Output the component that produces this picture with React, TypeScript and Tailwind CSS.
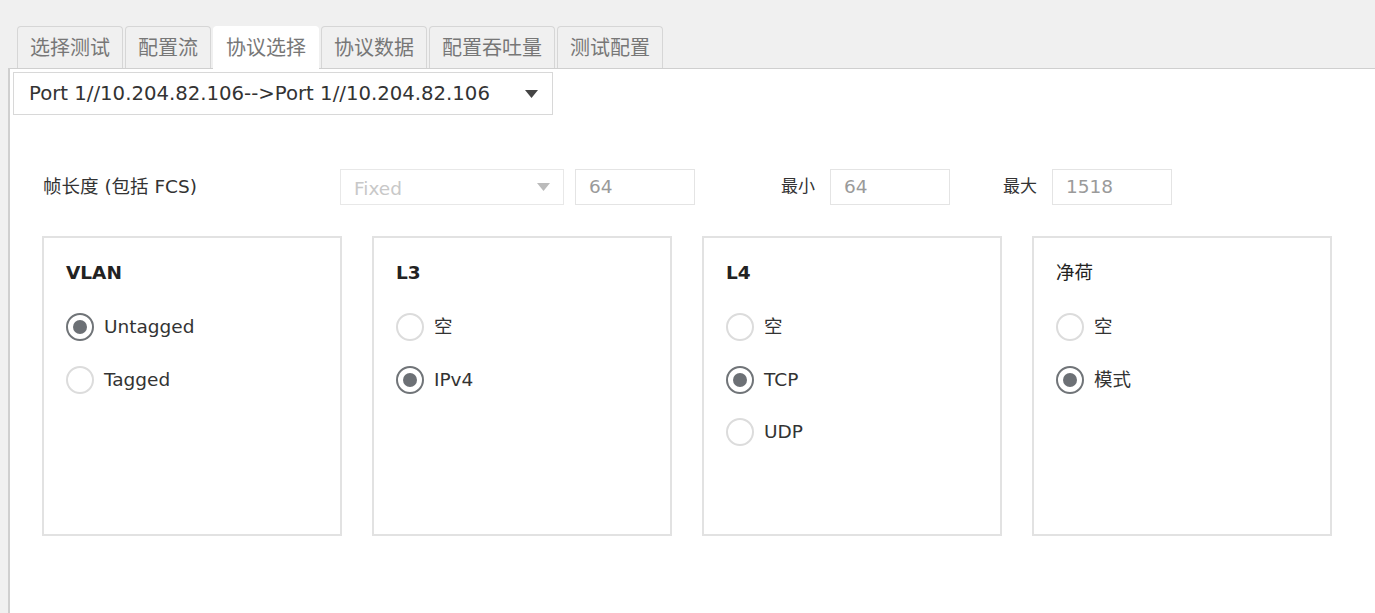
import React from "react";

const font = { fontFamily: '"DejaVu Sans", "Noto Sans CJK SC", sans-serif' };

const tabs = ["选择测试", "配置流", "协议选择", "协议数据", "配置吞吐量", "测试配置"];

function Radio({ label, checked }: { label: string; checked?: boolean }) {
  return (
    <div className="flex items-center h-[52.5px]">
      <div
        className={
          "w-[28px] h-[28px] rounded-full border-2 flex items-center justify-center bg-white shrink-0 " +
          (checked ? "border-[#707478]" : "border-[#dcdcdc]")
        }
      >
        {checked && <div className="w-[14px] h-[14px] rounded-full bg-[#6c7075]" />}
      </div>
      <span className="ml-[10px] text-[18.5px] text-[#333]">{label}</span>
    </div>
  );
}

function Card({ title, bold, items }: { title: string; bold?: boolean; items: { label: string; checked?: boolean }[] }) {
  return (
    <div className="w-[300px] h-[300px] border-2 border-[#e2e2e2] pl-[22px] pt-[22px]">
      <div className={"text-[18.5px] text-[#222] h-[26px] leading-[26px] " + (bold ? "font-bold" : "")}>{title}</div>
      <div className="mt-[15px]">
        {items.map((it) => (
          <Radio key={it.label} label={it.label} checked={it.checked} />
        ))}
      </div>
    </div>
  );
}

function Caret({ color }: { color: string }) {
  return (
    <svg width="13" height="8" viewBox="0 0 13 8">
      <polygon points="0,0 13,0 6.5,8" fill={color} />
    </svg>
  );
}

export default function App() {
  return (
    <div className="w-[1375px] h-[613px] bg-[#f0f0f0] flex flex-col overflow-hidden" style={font}>
      <div className="h-[26px] shrink-0" />
      <div className="flex pl-[17px] gap-[2px] h-[42px] shrink-0 relative z-10">
        {tabs.map((t, i) => {
          const active = i === 2;
          return (
            <div
              key={t}
              className={
                "px-[12px] rounded-t-[4px] border border-b-0 flex items-center text-[20px] text-[#777] " +
                (active ? "bg-white border-white h-[43px]" : "bg-[#f0f0f0] border-[#d6d6d6] h-[42px]")
              }
            >
              {t}
            </div>
          );
        })}
      </div>
      <div className="flex-1 ml-[8px] bg-white border-l-2 border-t border-[#cfcfcf] flex flex-col">
        <div className="ml-[3px] mt-[3px] w-[540px] h-[43px] border border-[#d8d8d8] flex items-center justify-between pl-[15px] pr-[14px]">
          <span className="text-[19.7px] text-[#333] whitespace-nowrap">Port 1//10.204.82.106--&gt;Port 1//10.204.82.106</span>
          <Caret color="#444" />
        </div>
        <div className="flex items-center mt-[54px] pl-[33px] h-[36px]">
          <div className="w-[297px] text-[18.5px] text-[#333] whitespace-nowrap">帧长度 (包括 FCS)</div>
          <div className="w-[224px] h-[36px] border border-[#e8e8e8] flex items-center justify-between pl-[13px] pr-[13px]">
            <span className="text-[18.5px] text-[#c8c8c8] mt-[3px]">Fixed</span>
            <Caret color="#bbb" />
          </div>
          <div className="ml-[11px] w-[120px] h-[36px] border border-[#e4e4e4] flex items-center pl-[13px] text-[18.5px] text-[#9a9a9a]">
            64
          </div>
          <div className="ml-[86px] text-[17px] text-[#333] w-[49px]">最小</div>
          <div className="w-[120px] h-[36px] border border-[#e4e4e4] flex items-center pl-[13px] text-[18.5px] text-[#9a9a9a]">
            64
          </div>
          <div className="ml-[53px] text-[17px] text-[#333] w-[49px]">最大</div>
          <div className="w-[120px] h-[36px] border border-[#e4e4e4] flex items-center pl-[13px] text-[18.5px] text-[#9a9a9a]">
            1518
          </div>
        </div>
        <div className="flex gap-[30px] mt-[31px] pl-[32px]">
          <Card title="VLAN" bold items={[{ label: "Untagged", checked: true }, { label: "Tagged" }]} />
          <Card title="L3" bold items={[{ label: "空" }, { label: "IPv4", checked: true }]} />
          <Card title="L4" bold items={[{ label: "空" }, { label: "TCP", checked: true }, { label: "UDP" }]} />
          <Card title="净荷" items={[{ label: "空" }, { label: "模式", checked: true }]} />
        </div>
      </div>
    </div>
  );
}
